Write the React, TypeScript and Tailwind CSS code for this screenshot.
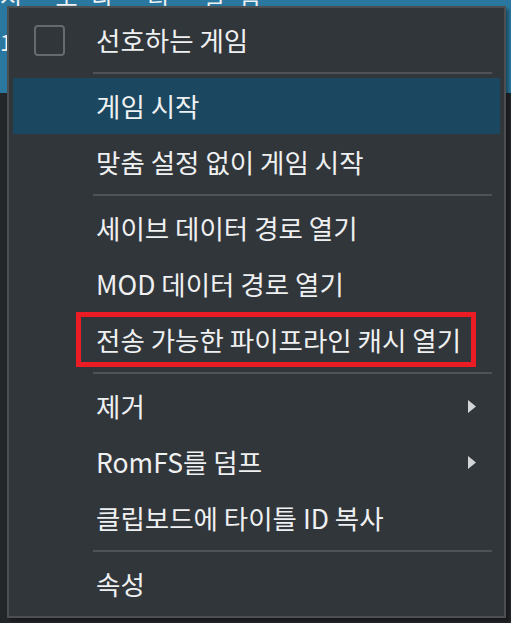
import { ReactNode } from 'react';

type Item =
  | { kind: 'sep' }
  | { kind: 'item'; label: string; active?: boolean; check?: boolean; sub?: boolean; marked?: boolean };

const items: Item[] = [
  { kind: 'item', label: '선호하는 게임', check: true },
  { kind: 'sep' },
  { kind: 'item', label: '게임 시작', active: true },
  { kind: 'item', label: '맞춤 설정 없이 게임 시작' },
  { kind: 'sep' },
  { kind: 'item', label: '세이브 데이터 경로 열기' },
  { kind: 'item', label: 'MOD 데이터 경로 열기' },
  { kind: 'item', label: '전송 가능한 파이프라인 캐시 열기', marked: true },
  { kind: 'sep' },
  { kind: 'item', label: '제거', sub: true },
  { kind: 'item', label: 'RomFS를 덤프', sub: true },
  { kind: 'item', label: '클립보드에 타이틀 ID 복사' },
  { kind: 'sep' },
  { kind: 'item', label: '속성' },
];

function Row({ children, active }: { children: ReactNode; active?: boolean }) {
  return (
    <div
      className={`relative flex h-[56px] items-center pl-[21px] pr-[24px] ${
        active ? 'bg-[#1b4860]' : ''
      }`}
    >
      {children}
    </div>
  );
}

export default function App() {
  return (
    <div
      className="relative h-[623px] w-[511px] overflow-hidden bg-[#232629] text-[#eff0f1]"
      style={{ fontFamily: '"Noto Sans CJK KR", "Noto Sans", sans-serif' }}
    >
      {/* window behind the menu */}
      <div className="flex h-[93px] flex-col overflow-hidden bg-[#2a78a0] text-[24px] leading-none">
        <div className="mt-[-16px] whitespace-nowrap pl-0 tracking-[14px]">시 오나 티 컬럼</div>
        <div className="mt-[22px] pl-0 text-[22px]">1</div>
      </div>

      <div className="absolute left-[7px] top-[6px] w-[499px] border-2 border-[#4c4f52] bg-[#31363b] p-1 shadow-[3px_3px_3px_rgba(0,0,0,0.35)]">
        {items.map((it, i) =>
          it.kind === 'sep' ? (
            <div key={i} className="flex h-[10px] items-center pl-[80px] pr-[8px]">
              <div className="h-[2px] w-full bg-[#4f5358]" />
            </div>
          ) : (
            <Row key={i} active={it.active}>
              <span className="flex w-[62px] shrink-0">
                {it.check && <span className="h-[31px] w-[31px] rounded-[4px] border-2 border-[#666a6e]" />}
              </span>
              <span className="flex-1 whitespace-nowrap text-[26.5px] leading-none">{it.label}</span>
              {it.sub && (
                <svg width="8" height="13" viewBox="0 0 8 13" className="shrink-0">
                  <path d="M0 0 L8 6.5 L0 13 Z" fill="#d4d5d6" />
                </svg>
              )}
              {it.marked && (
                <span className="absolute left-[63px] top-0 h-[55px] w-[400px] border-[5px] border-[#ec1c24]" />
              )}
            </Row>
          ),
        )}
      </div>
    </div>
  );
}
